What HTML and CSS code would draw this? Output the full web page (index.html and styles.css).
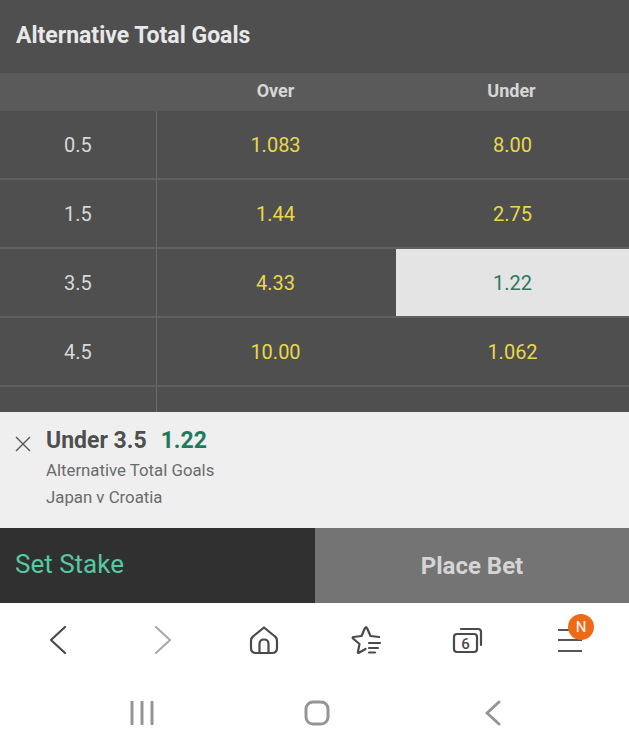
FILE: index.html
```html
<!DOCTYPE html>
<html lang="en">
<head>
    <meta charset="utf-8" />
    <title>Alternative Total Goals</title>
    <link rel="stylesheet" href="styles.css">
</head>
<body>
    <div class="market">
        <div class="market-title">Alternative Total Goals</div>
        <div class="odds-row odds-head">
            <div class="cell"></div>
            <div class="cell">Over</div>
            <div class="cell">Under</div>
        </div>
        <div class="odds-row">
            <div class="cell line">0.5</div>
            <div class="cell price">1.083</div>
            <div class="cell price">8.00</div>
        </div>
        <div class="odds-row">
            <div class="cell line">1.5</div>
            <div class="cell price">1.44</div>
            <div class="cell price">2.75</div>
        </div>
        <div class="odds-row">
            <div class="cell line">3.5</div>
            <div class="cell price">4.33</div>
            <div class="cell price selected">1.22</div>
        </div>
        <div class="odds-row">
            <div class="cell line">4.5</div>
            <div class="cell price">10.00</div>
            <div class="cell price">1.062</div>
        </div>
        <div class="odds-row">
            <div class="cell line"></div>
            <div class="cell price"></div>
            <div class="cell price"></div>
        </div>
    </div>

    <div class="slip">
        <svg class="slip-close" width="16" height="16" viewBox="0 0 16 16">
            <path d="M1 1 L15 15 M15 1 L1 15" />
        </svg>
        <div class="slip-info">
            <div class="slip-pick"><span>Under 3.5</span><span class="slip-price">1.22</span></div>
            <div class="slip-text">Alternative Total Goals</div>
            <div class="slip-text">Japan v Croatia</div>
        </div>
    </div>

    <div class="actions">
        <div class="set-stake">Set Stake</div>
        <div class="place-bet">Place Bet</div>
    </div>

    <div class="browser-bar">
        <svg class="icon" width="32" height="32" viewBox="0 0 32 32">
            <path d="M23 3 L9 16 L23 29" />
        </svg>
        <svg class="icon muted" width="32" height="32" viewBox="0 0 32 32">
            <path d="M9 3 L23 16 L9 29" />
        </svg>
        <svg class="icon" width="32" height="32" viewBox="0 0 32 32">
            <path d="M5 12.5 L16 3.5 L27 12.5 Q29 14 29 17 V24 Q29 29 24 29 H8 Q3 29 3 24 V17 Q3 14 5 12.5 Z" />
            <path d="M11.5 29 V20 Q11.5 15.5 16 15.5 Q20.5 15.5 20.5 20 V29" />
        </svg>
        <svg class="icon" width="32" height="32" viewBox="0 0 32 32">
            <path d="M15.5 25 L8.5 29 Q7.5 29 8 27.5 L9.5 20 L3 14.5 Q2 13.5 3.5 13 L11.5 12 L15 4 Q16 2.5 17 4 L20.5 12 L29 13" />
            <path d="M19 19 H30 M19 24 H28 M19 28.5 H25" />
        </svg>
        <svg class="icon" width="32" height="32" viewBox="0 0 32 32">
            <rect x="3" y="10" width="23" height="18" rx="3" />
            <path d="M10 5 H27 Q30 5 30 8 V21" />
            <text class="tab-count" x="14.5" y="25">6</text>
        </svg>
        <div class="menu-icon">
            <span></span>
            <span></span>
            <span></span>
            <div class="menu-badge">N</div>
        </div>
    </div>

    <div class="system-bar">
        <div class="system-btn">
            <svg width="24" height="24" viewBox="0 0 24 24">
                <path d="M2 1 V23 M12 1 V23 M22 1 V23" />
            </svg>
        </div>
        <div class="system-btn">
            <svg width="28" height="26" viewBox="0 0 28 26">
                <rect x="3" y="2" width="22" height="22" rx="7" />
            </svg>
        </div>
        <div class="system-btn">
            <svg width="24" height="26" viewBox="0 0 24 26">
                <path d="M18 2 L6 13 L18 24" />
            </svg>
        </div>
    </div>
</body>
</html>
```

FILE: styles.css
```css
* {
    box-sizing: border-box;
}

html, body {
    margin: 0;
    height: 750px;
    overflow: hidden;
    background: #fff;
}

body {
    width: 629px;
    font-family: Roboto, "Liberation Sans", sans-serif;
}

.market {
    height: 412px;
    overflow: hidden;
    background: #4f4f4f;
}

.market-title {
    height: 73px;
    padding: 22px 0 0 16px;
    font-size: 23px;
    line-height: 28px;
    font-weight: 700;
    color: #e8e8e8;
}

.odds-row {
    display: grid;
    grid-template-columns: 157px 239px 233px;
    height: 69px;
    border-bottom: 2px solid #606060;
}

.odds-head {
    height: 38px;
    border-bottom: none;
    background: #5a5a5a;
    font-size: 18px;
    font-weight: 700;
    color: #d6d6d6;
}

.cell {
    display: flex;
    align-items: center;
    justify-content: center;
    padding: 0 2px 2px 0;
}

.odds-head .cell {
    padding-bottom: 3px;
}

.line {
    padding: 0;
    border-right: 1px solid #6a6a6a;
    font-size: 20px;
    color: #d8d8d8;
}

.price {
    padding-bottom: 0;
    font-size: 20px;
    color: #e8d84a;
}

.price:last-child {
    padding-right: 0;
}

.selected {
    background: #e4e4e4;
    color: #2a7a5e;
}

.slip {
    display: flex;
    height: 116px;
    background: #efefef;
}

.slip-close {
    margin: 24px 0 0 15px;
    fill: none;
    stroke: #555;
    stroke-width: 1.4;
}

.slip-info {
    padding: 14px 0 0 15px;
}

.slip-pick {
    display: flex;
    gap: 14px;
    font-size: 23px;
    line-height: 30px;
    font-weight: 700;
    color: #4f4f4f;
}

.slip-price {
    color: #1f7a5c;
}

.slip-text {
    margin-top: 1px;
    font-size: 16.8px;
    line-height: 26px;
    color: #6b6b6b;
}

.actions {
    display: flex;
    height: 75px;
}

.set-stake {
    width: 315px;
    padding: 20px 0 0 15px;
    background: #303030;
    font-size: 26px;
    line-height: 32px;
    color: #55c9a0;
}

.place-bet {
    flex: 1;
    display: flex;
    align-items: center;
    justify-content: center;
    background: #747474;
    font-size: 24px;
    font-weight: 700;
    color: #d4d4d4;
}

.browser-bar {
    display: grid;
    grid-template-columns: 116px 94px 108px 96px 106px 100px;
    align-items: center;
    justify-items: center;
    height: 74px;
    background: #fff;
}

.icon {
    fill: none;
    stroke: #4a4a4a;
    stroke-width: 2.2;
    stroke-linecap: round;
    stroke-linejoin: round;
}

.muted {
    stroke: #aaa;
}

.tab-count {
    fill: #4a4a4a;
    stroke: none;
    font-size: 15px;
    font-weight: 500;
    text-anchor: middle;
}

.menu-icon {
    position: relative;
    display: flex;
    flex-direction: column;
    gap: 8.5px;
    width: 24px;
}

.menu-icon span {
    display: block;
    height: 2px;
    background: #555;
}

.menu-badge {
    position: absolute;
    top: -15px;
    left: 10px;
    width: 26px;
    height: 26px;
    border-radius: 50%;
    background: #ee6a17;
    color: #fff;
    font-size: 15px;
    line-height: 26px;
    text-align: center;
}

.system-bar {
    display: grid;
    grid-template-columns: repeat(3, 175.5px);
    padding: 0 0 0 54px;
    height: 73px;
}

.system-btn {
    display: flex;
    align-items: center;
    justify-content: center;
    padding-bottom: 2px;
}

.system-btn svg {
    fill: none;
    stroke: #959595;
    stroke-width: 3;
    stroke-linecap: round;
    stroke-linejoin: round;
}
```
